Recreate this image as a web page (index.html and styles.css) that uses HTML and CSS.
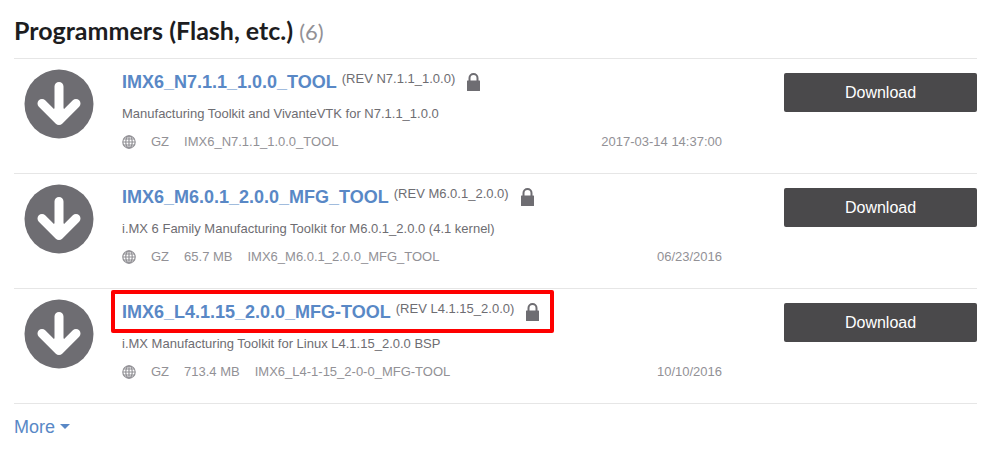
FILE: index.html
```html
<!DOCTYPE html>
<html lang="en">
<head>
  <meta charset="UTF-8" />
  <title>Programmers (Flash, etc.)</title>
  <link rel="stylesheet" href="styles.css">
</head>
<body>
  <!-- shared icons -->
  <svg class="sprite" aria-hidden="true">
    <symbol id="icon-arrow" viewBox="0 0 70 70">
      <circle cx="35" cy="35" r="34.5" fill="#6e6d72" />
      <path d="M35 17.500v32M18 34.500l17 17 17-17" fill="none" stroke="#fff" stroke-width="9" stroke-linecap="round" stroke-linejoin="round" />
      <path d="M30 39l5 5 5-5v12H30z" fill="#fff" />
    </symbol>
    <symbol id="icon-lock" viewBox="0 0 13 18">
      <path d="M2.500 8V5a4 4 0 0 1 8 0v3" fill="none" stroke="#6e6d72" stroke-width="2" />
      <rect y="7.500" width="13" height="10.500" rx=".5" fill="#6e6d72" />
    </symbol>
    <symbol id="icon-globe" viewBox="0 0 14 14">
      <g fill="none" stroke="#929196" stroke-width="1.200">
        <circle cx="7" cy="7" r="6.200" />
        <ellipse cx="7" cy="7" rx="3.200" ry="6.200" />
        <path d="M7 1v12M1 7h12M1.700 4h10.600M1.700 10h10.600" />
      </g>
    </symbol>
  </svg>

  <main class="container">
    <h2>Programmers (Flash, etc.) <span class="count">(6)</span></h2>

    <ul class="downloads">
      <li class="item">
        <svg class="arrow"><use href="#icon-arrow" /></svg>
        <div class="info">
          <div class="title">
            <a href="#">IMX6_N7.1.1_1.0.0_TOOL</a><span class="rev">(REV N7.1.1_1.0.0)</span>
            <svg class="lock"><use href="#icon-lock" /></svg>
          </div>
          <p class="desc">Manufacturing Toolkit and VivanteVTK for N7.1.1_1.0.0</p>
          <div class="meta">
            <svg class="globe"><use href="#icon-globe" /></svg>
            <span>GZ</span>
            <span>IMX6_N7.1.1_1.0.0_TOOL</span>
            <span class="date">2017-03-14 14:37:00</span>
          </div>
        </div>
        <button type="button">Download</button>
      </li>

      <li class="item">
        <svg class="arrow"><use href="#icon-arrow" /></svg>
        <div class="info">
          <div class="title">
            <a href="#">IMX6_M6.0.1_2.0.0_MFG_TOOL</a><span class="rev">(REV M6.0.1_2.0.0)</span>
            <svg class="lock"><use href="#icon-lock" /></svg>
          </div>
          <p class="desc">i.MX 6 Family Manufacturing Toolkit for M6.0.1_2.0.0 (4.1 kernel)</p>
          <div class="meta">
            <svg class="globe"><use href="#icon-globe" /></svg>
            <span>GZ</span>
            <span>65.7 MB</span>
            <span>IMX6_M6.0.1_2.0.0_MFG_TOOL</span>
            <span class="date">06/23/2016</span>
          </div>
        </div>
        <button type="button">Download</button>
      </li>

      <li class="item">
        <svg class="arrow"><use href="#icon-arrow" /></svg>
        <div class="info">
          <div class="title highlight">
            <a href="#">IMX6_L4.1.15_2.0.0_MFG-TOOL</a><span class="rev">(REV L4.1.15_2.0.0)</span>
            <svg class="lock"><use href="#icon-lock" /></svg>
          </div>
          <p class="desc">i.MX Manufacturing Toolkit for Linux L4.1.15_2.0.0 BSP</p>
          <div class="meta">
            <svg class="globe"><use href="#icon-globe" /></svg>
            <span>GZ</span>
            <span>713.4 MB</span>
            <span>IMX6_L4-1-15_2-0-0_MFG-TOOL</span>
            <span class="date">10/10/2016</span>
          </div>
        </div>
        <button type="button">Download</button>
      </li>
    </ul>

    <a href="#" class="more">More <span class="caret"></span></a>
  </main>
</body>
</html>
```

FILE: styles.css
```css
* {
  box-sizing: border-box;
}
body {
  margin: 0;
  background-color: #fff;
  color: #6e6d72;
  font-family: "Liberation Sans", Arial, sans-serif;
  font-size: 13px;
}
a {
  color: #5988c6;
  text-decoration: none;
}
.sprite {
  display: none;
}
.container {
  padding: 13px 22px 16px 14px;
}
h2 {
  margin: 0 0 9px;
  font-family: Lato, sans-serif;
  font-size: 25px;
  line-height: 34px;
  font-weight: bold;
  color: #1d1d1f;
}
.count {
  font-size: 22px;
  font-weight: normal;
  color: #929196;
}
.downloads {
  list-style: none;
  margin: 0;
  padding: 0;
  border-bottom: 1px solid #e6e6e6;
}
.item {
  display: grid;
  grid-template-columns: 70px 1fr 193px;
  align-items: start;
  height: 115px;
  padding: 10px 0 0 10px;
  border-top: 1px solid #e6e6e6;
}
.arrow {
  width: 70px;
  height: 70px;
}
.info {
  padding: 0 62px 0 28px;
}
.title {
  display: flex;
  align-items: center;
  position: relative;
  width: max-content;
  height: 26px;
}
.title a {
  font-size: 18px;
  font-weight: bold;
}
.rev {
  margin-left: 5px;
  padding-bottom: 8px;
}
.lock {
  width: 13px;
  height: 18px;
  margin-left: 12px;
}
/* red frame drawn around the marked title */
.highlight::after {
  content: "";
  position: absolute;
  inset: -9px -15px -8px -11px;
  border: 4px solid #fe0000;
  border-radius: 2px;
}
.desc {
  margin: 9px 0 8px;
  line-height: 20px;
}
.meta {
  display: flex;
  align-items: center;
  gap: 15px;
  line-height: 20px;
  color: #929196;
}
.globe {
  width: 14px;
  height: 14px;
}
.date {
  margin-left: auto;
}
button {
  height: 39px;
  margin-top: 4px;
  border: none;
  border-radius: 2px;
  background-color: #4a494b;
  color: #fff;
  font-family: inherit;
  font-size: 16px;
}
.more {
  display: inline-flex;
  align-items: center;
  gap: 5px;
  margin-top: 11px;
  font-size: 18px;
  line-height: 24px;
}
.caret {
  margin-bottom: 2px;
  border-top: 5px solid #5988c6;
  border-left: 5px solid transparent;
  border-right: 5px solid transparent;
}
```
